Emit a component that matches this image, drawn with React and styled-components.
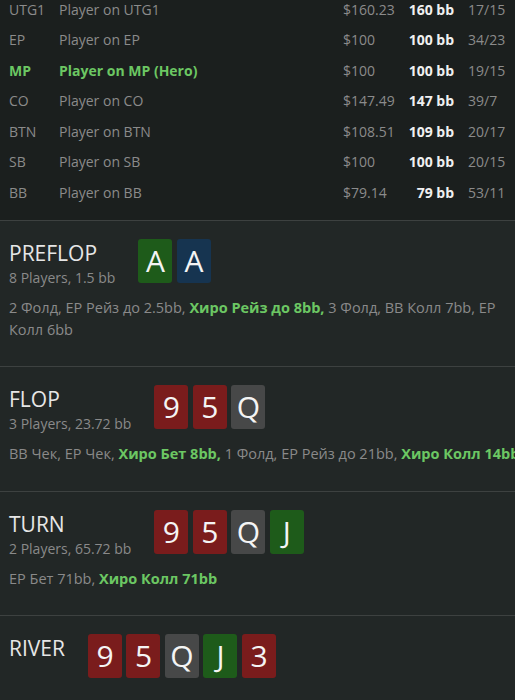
import styled, { createGlobalStyle } from "styled-components";

const GlobalStyle = createGlobalStyle`
  html, body {
    margin: 0;
    padding: 0;
    background: #222726;
    overflow: hidden;
  }
  body {
    font-family: "Open Sans", "Noto Sans", sans-serif;
  }
`;

const players = [
  { pos: "UTG1", name: "Player on UTG1", money: "$160.23", bb: "160 bb", ratio: "17/15" },
  { pos: "EP", name: "Player on EP", money: "$100", bb: "100 bb", ratio: "34/23" },
  { pos: "MP", name: "Player on MP (Hero)", money: "$100", bb: "100 bb", ratio: "19/15", hero: true },
  { pos: "CO", name: "Player on CO", money: "$147.49", bb: "147 bb", ratio: "39/7" },
  { pos: "BTN", name: "Player on BTN", money: "$108.51", bb: "109 bb", ratio: "20/17" },
  { pos: "SB", name: "Player on SB", money: "$100", bb: "100 bb", ratio: "20/15" },
  { pos: "BB", name: "Player on BB", money: "$79.14", bb: "79 bb", ratio: "53/11" },
];

const streets = [
  {
    title: "PREFLOP",
    sub: "8 Players, 1.5 bb",
    cards: [["A", "green"], ["A", "blue"]],
    actions: [
      { text: "2 Фолд, EP Рейз до 2.5bb, " },
      { text: "Хиро Рейз до 8bb,", hero: true },
      { text: " 3 Фолд, BB Колл 7bb, EP Колл 6bb" },
    ],
  },
  {
    title: "FLOP",
    sub: "3 Players, 23.72 bb",
    cards: [["9", "red"], ["5", "red"], ["Q", "gray"]],
    actions: [
      { text: "BB Чек, EP Чек, " },
      { text: "Хиро Бет 8bb,", hero: true },
      { text: " 1 Фолд, EP Рейз до 21bb, " },
      { text: "Хиро Колл 14bb", hero: true },
    ],
  },
  {
    title: "TURN",
    sub: "2 Players, 65.72 bb",
    cards: [["9", "red"], ["5", "red"], ["Q", "gray"], ["J", "green"]],
    actions: [
      { text: "EP Бет 71bb, " },
      { text: "Хиро Колл 71bb", hero: true },
    ],
  },
  {
    title: "RIVER",
    cards: [["9", "red"], ["5", "red"], ["Q", "gray"], ["J", "green"], ["3", "red"]],
  },
];

const suitColors = {
  green: "#1e5b1a",
  blue: "#163450",
  red: "#7a1c1c",
  gray: "#474848",
};

const App = () => {
  return (
    <Page>
      <GlobalStyle />
      <Table>
        {players.map((p) => (
          <Row key={p.pos}>
            <Name $hero={p.hero}>{p.pos}</Name>
            <Name $hero={p.hero}>{p.name}</Name>
            <Muted>{p.money}</Muted>
            <Stack>{p.bb}</Stack>
            <Ratio>{p.ratio}</Ratio>
          </Row>
        ))}
      </Table>
      {streets.map((s) => (
        <Section key={s.title}>
          <Head>
            <TitleBlock>
              <Title>{s.title}</Title>
              {s.sub && <Sub>{s.sub}</Sub>}
            </TitleBlock>
            <Cards>
              {s.cards.map(([rank, suit], i) => (
                <Card key={i} $suit={suit}>{rank}</Card>
              ))}
            </Cards>
          </Head>
          {s.actions && (
            <Actions>
              {s.actions.map((a, i) =>
                a.hero ? <Hero key={i}>{a.text}</Hero> : <span key={i}>{a.text}</span>
              )}
            </Actions>
          )}
        </Section>
      ))}
    </Page>
  );
};

const Page = styled.div`
  width: 530px;
  min-height: 700px;
  background: #222726;
`;

const Table = styled.div`
  background: #1b1f1e;
  margin-top: -6px;
  padding: 0 0 12px 9px;
`;

const Row = styled.div`
  display: grid;
  grid-template-columns: 50px 284px 63px 48px 1fr;
  height: 30.5px;
  align-items: center;
  font-size: 14px;
`;

const Name = styled.span`
  white-space: nowrap;
  color: ${(p) => (p.$hero ? "#6cc763" : "#8b8b8b")};
  font-weight: ${(p) => (p.$hero ? 700 : 400)};
`;

const Muted = styled.span`
  white-space: nowrap;
  color: #8b8b8b;
`;

const Stack = styled.span`
  text-align: right;
  color: #f0f0f0;
  font-weight: 700;
  white-space: nowrap;
`;

const Ratio = styled.span`
  padding-left: 14px;
  color: #8b8b8b;
`;

const Section = styled.section`
  border-top: 1px solid #3d4140;
  padding: 18px 9px 25.5px;
`;

const Head = styled.div`
  display: flex;
  align-items: flex-start;
  gap: 23px;
`;

const TitleBlock = styled.div``;

const Title = styled.h2`
  margin: 0;
  font-size: 21px;
  font-weight: 400;
  line-height: 28px;
  color: #e6e6e6;
`;

const Sub = styled.div`
  font-size: 14px;
  line-height: 22px;
  color: #8a8a8a;
  white-space: nowrap;
`;

const Cards = styled.div`
  display: flex;
  gap: 4.5px;
`;

const Card = styled.div`
  width: 34px;
  height: 44px;
  border-radius: 3px;
  background: ${(p) => suitColors[p.$suit]};
  color: #f4f4f4;
  font-size: 30px;
  line-height: 1;
  display: flex;
  align-items: center;
  justify-content: center;
`;

const Actions = styled.p`
  margin: 8px 0 0;
  font-size: 14.5px;
  line-height: 22px;
  color: #8a8a8a;
`;

const Hero = styled.b`
  color: #6cc763;
  font-weight: 700;
`;

export default App;
